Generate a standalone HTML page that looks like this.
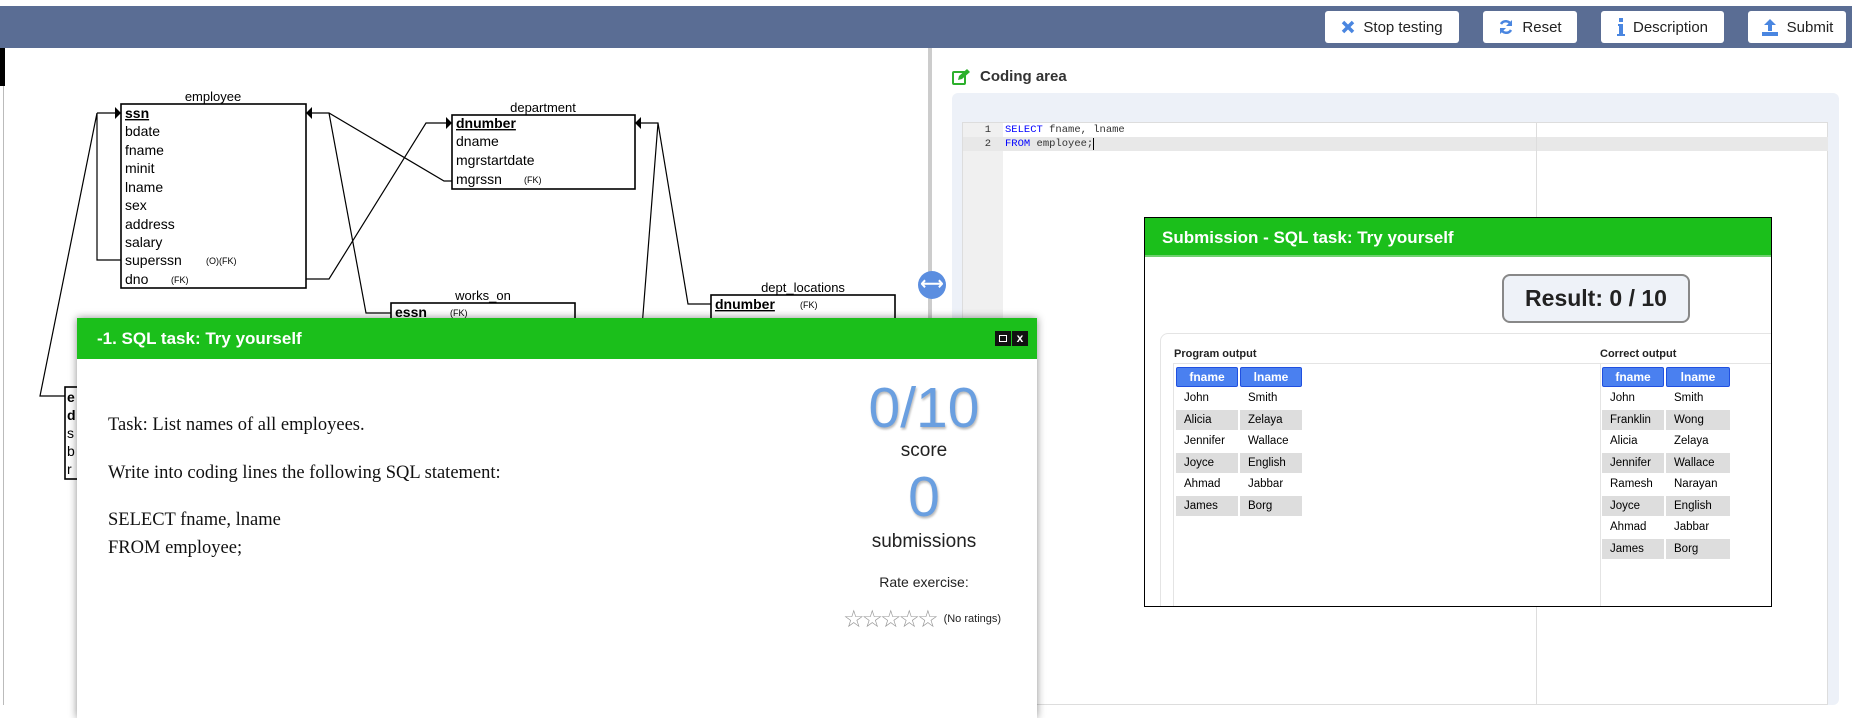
<!DOCTYPE html>
<html><head><meta charset="utf-8"><style>
*{box-sizing:border-box;margin:0;padding:0}
body{width:1852px;height:705px;overflow:hidden;background:#fff;font-family:"Liberation Sans",sans-serif;position:relative}
.abs{position:absolute}
.top{left:0;top:6px;width:1852px;height:42px;background:#5a6d94}
.btn{position:absolute;top:11px;height:32px;background:#fff;border-radius:3px;font-size:15px;color:#222;display:flex;align-items:center;justify-content:center;gap:8px}
.btn svg{display:block}
.dlg{position:absolute;background:#fff}
.hdr{background:#1bbf1b;color:#fff;font-weight:bold;font-size:17px}
table{border-collapse:separate;border-spacing:2px;font-size:11.5px}
td,th{height:19.5px;padding:0 0 0 8px;text-align:left;font-weight:normal}
th{background:#4a80f0;color:#fff;font-weight:bold;border:1px solid #2050e0;border-radius:2px;text-align:center;padding:0;font-size:12px}
tr.g td{background:#ddd}
</style></head><body>
<div class="abs top"></div>
<div class="btn" style="left:1325px;width:134px"><svg width="14" height="14" viewBox="0 0 14 14"><path d="M2 2L12 12M12 2L2 12" stroke="#4a86e0" stroke-width="3.5"/></svg>Stop testing</div>
<div class="btn" style="left:1483px;width:94px"><svg width="16" height="16" viewBox="0 0 16 16"><path d="M13 6A5.5 5.5 0 0 0 3 5M3 10A5.5 5.5 0 0 0 13 11" stroke="#4a86e0" stroke-width="2.5" fill="none"/><path d="M14 1v6h-6zM2 15v-6h6z" fill="#4a86e0"/></svg>Reset</div>
<div class="btn" style="left:1601px;width:123px"><svg width="8" height="18" viewBox="0 0 8 18"><rect x="2" y="0" width="4" height="4" fill="#4a86e0"/><path d="M1 6h5v10h2v2H0v-2h2v-8H1z" fill="#4a86e0"/></svg>Description</div>
<div class="btn" style="left:1748px;width:98px"><svg width="18" height="18" viewBox="0 0 18 18"><path d="M9 1l6 6h-4v6H7V7H3z" fill="#4a86e0"/><rect x="1" y="14" width="16" height="4" fill="#4a86e0"/></svg>Submit</div>

<!-- left panel -->
<div class="abs" style="left:0;top:48px;width:5px;height:38px;background:#000"></div>
<div class="abs" style="left:3px;top:86px;width:1px;height:619px;background:#bbb"></div>
<div class="abs" style="left:928px;top:48px;width:4px;height:657px;background:#ccc"></div>
<svg class="abs" style="left:0;top:48px" width="930" height="657" viewBox="0 48 930 657" font-family="Liberation Sans,sans-serif" font-size="14">
<g fill="none" stroke="#000" stroke-width="1.2">
<rect x="121" y="104" width="185" height="184" stroke-width="1.6"/>
<rect x="452" y="115" width="183" height="74" stroke-width="1.6"/>
<rect x="391" y="303" width="184" height="40" stroke-width="1.6"/>
<rect x="711" y="295" width="184" height="40" stroke-width="1.6"/>
<rect x="65" y="387" width="30" height="92" stroke-width="1.6"/>
<path d="M97 113H117M97 113V260H121M97 113L40 396H65"/>
<path d="M310 113H329L444 181H452M329 113L366 313H391"/>
<path d="M306 279H329L426 123H448"/>
<path d="M639 123H658L688 304H711M658 123L641 340"/>
</g>
<g fill="#000">
<path d="M121 113l-6-6v12z"/><path d="M306 113l6-6v12z"/><path d="M452 123l-6-6v12z"/><path d="M635 123l6-6v12z"/>
</g>
<g text-anchor="middle" font-size="13"><text x="213" y="101">employee</text><text x="543" y="112">department</text><text x="483" y="300">works_on</text><text x="803" y="292">dept_locations</text></g>
<g>
<text x="125" y="118" font-weight="bold" text-decoration="underline">ssn</text>
<text x="125" y="136">bdate</text><text x="125" y="155">fname</text><text x="125" y="173">minit</text><text x="125" y="192">lname</text><text x="125" y="210">sex</text><text x="125" y="229">address</text><text x="125" y="247">salary</text><text x="125" y="265">superssn</text><text x="125" y="284">dno</text>
<text x="206" y="264" font-size="9">(O)(FK)</text><text x="171" y="283" font-size="9">(FK)</text>
<text x="456" y="128" font-weight="bold" text-decoration="underline">dnumber</text>
<text x="456" y="146">dname</text><text x="456" y="165">mgrstartdate</text><text x="456" y="184">mgrssn</text><text x="524" y="183" font-size="9">(FK)</text>
<text x="395" y="317" font-weight="bold">essn</text><text x="450" y="316" font-size="9">(FK)</text>
<text x="715" y="309" font-weight="bold" text-decoration="underline">dnumber</text><text x="800" y="308" font-size="9">(FK)</text>
<text x="67" y="402" font-weight="bold">e</text><text x="67" y="420" font-weight="bold">d</text><text x="67" y="438">s</text><text x="67" y="456">b</text><text x="67" y="474">r</text>
</g>
</svg>
<div class="abs" style="left:918px;top:271px;width:28px;height:28px;border-radius:50%;background:#5b8ee0;color:#fff;font-size:16px;text-align:center;line-height:28px;font-weight:bold">⟷</div>

<!-- right panel -->
<svg class="abs" style="left:952px;top:69px" width="20" height="16" viewBox="0 0 20 16"><rect x="1" y="3" width="12" height="12" fill="none" stroke="#2cb02c" stroke-width="2" rx="1"/><path d="M6 11l1-4 8-7 3 3-8 7z" fill="#2cb02c"/></svg>
<div class="abs" style="left:980px;top:68px;font-size:15px;font-weight:bold;color:#333">Coding area</div>
<div class="abs" style="left:952px;top:93px;width:887px;height:612px;background:#edf1f8;border-radius:6px"></div>
<div class="abs" style="left:962px;top:122px;width:866px;height:583px;background:#fff;border:1px solid #ddd"></div>
<div class="abs" style="left:963px;top:123px;width:40px;height:582px;background:#f0f0f0"></div>
<div class="abs" style="left:963px;top:137px;width:865px;height:14px;background:#e8e8e8"></div>
<div class="abs" style="left:1536px;top:123px;width:1px;height:582px;background:#ddd"></div>
<div class="abs" style="left:963px;top:123px;font-family:'Liberation Mono',monospace;font-size:10.5px;line-height:14px;color:#333">
<div><span style="display:inline-block;width:28px;text-align:right">1</span><span style="display:inline-block;width:14px"></span><span style="color:#00f">SELECT</span> fname, lname</div>
<div><span style="display:inline-block;width:28px;text-align:right">2</span><span style="display:inline-block;width:14px"></span><span style="color:#00f">FROM</span> employee;<span style="border-left:1px solid #000"></span></div>
</div>

<!-- submission dialog -->
<div class="dlg" style="left:1144px;top:217px;width:628px;height:390px;border:1.5px solid #000;overflow:hidden">
<div class="hdr" style="height:39px;padding:10px 0 0 17px;border-bottom:2px solid #6fd06f">Submission - SQL task: Try yourself</div>
<div class="abs" style="left:357px;top:56px;width:188px;height:49px;background:#eef2f8;border:2px solid #888;border-radius:8px;font-size:23px;font-weight:bold;text-align:center;line-height:45px;color:#222">Result: 0 / 10</div>
<div class="abs" style="left:15px;top:115px;width:640px;height:300px;border:1px solid #e4e4e4;border-radius:8px 0 0 0"></div>
<div class="abs" style="left:29px;top:130px;font-size:11px;font-weight:bold;color:#222">Program output</div>
<div class="abs" style="left:455px;top:130px;font-size:11px;font-weight:bold;color:#222">Correct output</div>
<div class="abs" style="left:28px;top:145px;width:1px;height:245px;background:#e4e4e4"></div>
<div class="abs" style="left:455px;top:145px;width:1px;height:245px;background:#e4e4e4"></div>
<div class="abs" style="left:28px;top:145px;width:600px;height:1px;background:#e4e4e4"></div>
<table class="abs" style="left:29px;top:147px"><tr><th style="width:62px">fname</th><th style="width:62px">lname</th></tr>
<tr><td>John</td><td>Smith</td></tr><tr class="g"><td>Alicia</td><td>Zelaya</td></tr><tr><td>Jennifer</td><td>Wallace</td></tr><tr class="g"><td>Joyce</td><td>English</td></tr><tr><td>Ahmad</td><td>Jabbar</td></tr><tr class="g"><td>James</td><td>Borg</td></tr></table>
<table class="abs" style="left:455px;top:147px"><tr><th style="width:62px">fname</th><th style="width:64px">lname</th></tr>
<tr><td>John</td><td>Smith</td></tr><tr class="g"><td>Franklin</td><td>Wong</td></tr><tr><td>Alicia</td><td>Zelaya</td></tr><tr class="g"><td>Jennifer</td><td>Wallace</td></tr><tr><td>Ramesh</td><td>Narayan</td></tr><tr class="g"><td>Joyce</td><td>English</td></tr><tr><td>Ahmad</td><td>Jabbar</td></tr><tr class="g"><td>James</td><td>Borg</td></tr></table>
</div>

<!-- task dialog -->
<div class="dlg" style="left:77px;top:318px;width:960px;height:400px;box-shadow:0 0 8px rgba(0,0,0,.45)">
<div class="hdr" style="height:41px;padding:11px 0 0 20px">-1. SQL task: Try yourself</div>
<div class="abs" style="left:918px;top:13px;width:16px;height:15px;background:#111"><div style="margin:4px;width:8px;height:7px;border:1.5px solid #fff"></div></div>
<div class="abs" style="left:935px;top:13px;width:16px;height:15px;background:#111;color:#fff;font-size:12px;font-weight:bold;text-align:center;line-height:15px">x</div>
<div class="abs" style="left:31px;top:93px;font-family:'Liberation Serif',serif;font-size:18.5px;color:#111;line-height:28px">
<div>Task: List names of all employees.</div>
<div style="margin-top:20px">Write into coding lines the following SQL statement:</div>
<div style="margin-top:19px">SELECT fname, lname</div>
<div>FROM employee;</div>
</div>
<div class="abs" style="left:747px;top:0;width:200px;text-align:center;color:#222">
<div class="abs" style="left:0;top:57px;width:200px;font-size:57px;color:#6a9fe0;text-shadow:1px 2px 2px #bbb">0/10</div>
<div class="abs" style="left:0;top:122px;width:200px;font-size:19px">score</div>
<div class="abs" style="left:0;top:146px;width:200px;font-size:57px;color:#6a9fe0;text-shadow:1px 2px 2px #bbb">0</div>
<div class="abs" style="left:0;top:213px;width:200px;font-size:19px">submissions</div>
<div class="abs" style="left:0;top:256px;width:200px;font-size:14px">Rate exercise:</div>
<div class="abs" style="left:19px;top:287px;font-size:24px;color:#999;letter-spacing:-3px;white-space:nowrap">☆☆☆☆☆<span style="font-size:11px;color:#222;letter-spacing:0;vertical-align:5px;margin-left:8px">(No ratings)</span></div>
</div>
</div>
</body></html>
